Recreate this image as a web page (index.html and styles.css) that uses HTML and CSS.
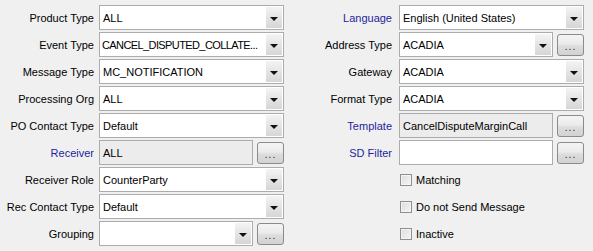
FILE: index.html
```html
<!DOCTYPE html>
<html lang="en">
  <head>
    <meta charset="UTF-8" />
    <title>Message Config</title>
    <link rel="stylesheet" href="styles.css">
  </head>
  <body>
    <div class="form">
      <!-- row 1 -->
      <label class="lbl">Product Type</label>
      <div class="combo"><span class="val">ALL</span><span class="arrow"></span></div>
      <label class="lbl link">Language</label>
      <div class="combo"><span class="val">English (United States)</span><span class="arrow"></span></div>

      <!-- row 2 -->
      <label class="lbl">Event Type</label>
      <div class="combo"><span class="val tight">CANCEL_DISPUTED_COLLATE...</span><span class="arrow"></span></div>
      <label class="lbl">Address Type</label>
      <div class="with-btn">
        <div class="combo"><span class="val">ACADIA</span><span class="arrow"></span></div>
        <button class="dots">...</button>
      </div>

      <!-- row 3 -->
      <label class="lbl">Message Type</label>
      <div class="combo"><span class="val">MC_NOTIFICATION</span><span class="arrow"></span></div>
      <label class="lbl">Gateway</label>
      <div class="combo"><span class="val">ACADIA</span><span class="arrow"></span></div>

      <!-- row 4 -->
      <label class="lbl">Processing Org</label>
      <div class="combo"><span class="val">ALL</span><span class="arrow"></span></div>
      <label class="lbl">Format Type</label>
      <div class="combo"><span class="val">ACADIA</span><span class="arrow"></span></div>

      <!-- row 5 -->
      <label class="lbl">PO Contact Type</label>
      <div class="combo"><span class="val">Default</span><span class="arrow"></span></div>
      <label class="lbl link">Template</label>
      <div class="with-btn">
        <div class="field readonly">CancelDisputeMarginCall</div>
        <button class="dots">...</button>
      </div>

      <!-- row 6 -->
      <label class="lbl link">Receiver</label>
      <div class="with-btn">
        <div class="field readonly">ALL</div>
        <button class="dots">...</button>
      </div>
      <label class="lbl link">SD Filter</label>
      <div class="with-btn">
        <div class="field"></div>
        <button class="dots">...</button>
      </div>

      <!-- row 7 -->
      <label class="lbl">Receiver Role</label>
      <div class="combo"><span class="val">CounterParty</span><span class="arrow"></span></div>
      <span></span>
      <label class="check"><span class="box"></span>Matching</label>

      <!-- row 8 -->
      <label class="lbl">Rec Contact Type</label>
      <div class="combo"><span class="val">Default</span><span class="arrow"></span></div>
      <span></span>
      <label class="check"><span class="box"></span>Do not Send Message</label>

      <!-- row 9 -->
      <label class="lbl">Grouping</label>
      <div class="with-btn">
        <div class="combo"><span class="val"></span><span class="arrow"></span></div>
        <button class="dots">...</button>
      </div>
      <span></span>
      <label class="check"><span class="box"></span>Inactive</label>
    </div>
  </body>
</html>
```

FILE: styles.css
```css
* {
  box-sizing: border-box;
  margin: 0;
  padding: 0;
}

body {
  font-family: "Liberation Sans", Arial, sans-serif;
  font-size: 11px;
  color: #000;
  background-color: #f0f0f0;
}

.form {
  display: grid;
  grid-template-columns: 99px 185px 115px 185px;
  grid-auto-rows: 25px;
  row-gap: 2px;
  padding-top: 5px;
}

.lbl {
  display: flex;
  align-items: center;
  justify-content: flex-end;
  padding-right: 5px;
  white-space: nowrap;
}

.form .lbl:nth-child(4n + 3) {
  padding-right: 7px;
}

.lbl.link {
  color: #1f1f9c;
}

.combo,
.field {
  display: flex;
  align-items: center;
  height: 25px;
  border: 1px solid #acacac;
  background-color: #fff;
  min-width: 0;
}

.combo .val {
  flex: 1;
  padding-left: 3px;
  white-space: nowrap;
  overflow: hidden;
}

.combo .val.tight {
  letter-spacing: -0.6px;
  padding-left: 2px;
}

.combo .arrow {
  width: 16px;
  align-self: stretch;
  margin: 1px;
  background: linear-gradient(to bottom, #f4f4f4, #e4e4e4 50%, #d6d6d6);
  position: relative;
}

.combo .arrow::after {
  content: "";
  position: absolute;
  left: 4px;
  top: 10px;
  border-left: 4px solid transparent;
  border-right: 4px solid transparent;
  border-top: 4px solid #111;
}

.field {
  flex: 1;
  padding-left: 3px;
}

.field.readonly {
  background-color: #ececec;
}

.with-btn {
  display: flex;
  align-items: center;
  gap: 4px;
}

.with-btn .combo {
  flex: 1;
}

.dots {
  width: 27px;
  height: 22px;
  flex: none;
  border: 1px solid #8b8b8b;
  border-radius: 3px;
  background: linear-gradient(to bottom, #f4f4f4, #ebebeb 45%, #dddddd 55%, #d2d2d2);
  font-family: "Liberation Sans", Arial, sans-serif;
  font-size: 10px;
  line-height: 18px;
  padding-top: 3px;
  color: #222;
  letter-spacing: 1px;
}

.check {
  display: flex;
  align-items: center;
  gap: 4px;
  padding-left: 1px;
}

.check .box {
  width: 12px;
  height: 12px;
  border: 1px solid #8f8f8f;
  background: linear-gradient(135deg, #dcdcdc, #f6f6f6);
  box-shadow: inset 0 0 0 1px #f4f4f4;
}
```
